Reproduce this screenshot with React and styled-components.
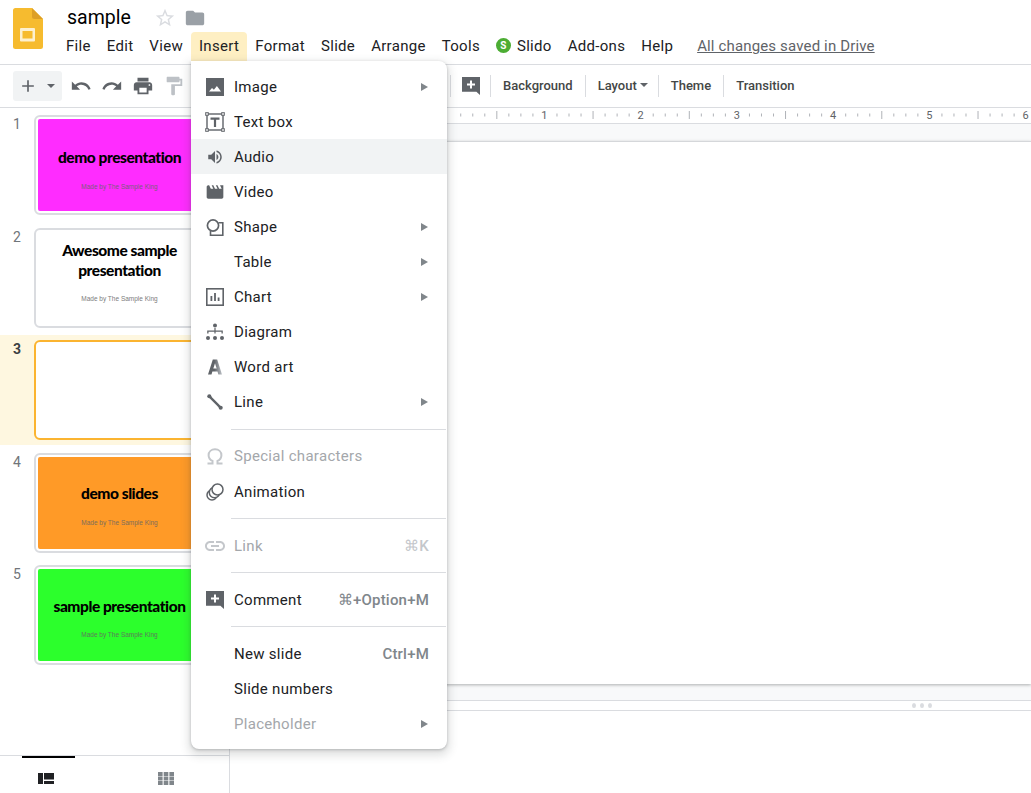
import React from "react";
import styled, { createGlobalStyle } from "styled-components";

const GlobalStyle = createGlobalStyle`
  html, body {
    margin: 0;
    height: 100%;
    overflow: hidden;
    background: #fff;
    font-family: Roboto, "Liberation Sans", sans-serif;
    color: #202124;
  }
`;

//Icons
const Svg = ({ size = 24, box = "0 0 24 24", color = "#5f6368", children }) => (
  <StyledSvg width={size} height={size} viewBox={box} fill={color}>
    {children}
  </StyledSvg>
);

const StyledSvg = styled.svg`
  flex-shrink: 0;
  display: block;
`;

const icons = {
  image: (c) => (
    <Svg size={18} box="0 0 18 18" color={c}>
      <path d="M0 0h18v18H0z" />
      <path fill="#fff" d="M3 13.5l3-3.4 1.9 1.7 3-3.8 4.1 5.5z" />
    </Svg>
  ),
  textbox: (c) => (
    <Svg size={20} box="0 0 20 20" color={c}>
      <rect x="2" y="2" width="16" height="16" fill="none" stroke={c} strokeWidth="1.4" />
      <g fill="#fff" stroke={c} strokeWidth="1">
        <rect x="0.7" y="0.7" width="2.6" height="2.6" />
        <rect x="16.7" y="0.7" width="2.6" height="2.6" />
        <rect x="0.7" y="16.7" width="2.6" height="2.6" />
        <rect x="16.7" y="16.7" width="2.6" height="2.6" />
      </g>
      <path d="M5.5 5.5h9v2.2h-3.4V15H8.9V7.7H5.5z" />
    </Svg>
  ),
  audio: (c) => (
    <Svg size={18} color={c}>
      <path d="M3 9v6h4l5 5V4L7 9H3zm13.5 3c0-1.77-1.02-3.29-2.5-4.03v8.05c1.48-.73 2.5-2.25 2.5-4.02zM14 3.23v2.06c2.89.86 5 3.54 5 6.71s-2.11 5.85-5 6.71v2.06c4.01-.91 7-4.49 7-8.77s-2.99-7.86-7-8.77z" />
    </Svg>
  ),
  video: (c) => (
    <Svg size={20} color={c}>
      <path d="M18 4l2 4h-3l-2-4h-2l2 4h-3l-2-4H8l2 4H7L5 4H4c-1.1 0-1.99.9-1.99 2L2 18c0 1.1.9 2 2 2h16c1.1 0 2-.9 2-2V4h-4z" />
    </Svg>
  ),
  shape: (c) => (
    <Svg size={18} box="0 0 18 18" color="none">
      <circle cx="7" cy="7.5" r="5.6" stroke={c} strokeWidth="1.7" />
      <path d="M12.5 4.8h4.3v12.4H4.5v-4.2" stroke={c} strokeWidth="1.6" />
    </Svg>
  ),
  chart: (c) => (
    <Svg size={18} box="0 0 18 18" color={c}>
      <rect x="0.8" y="0.8" width="16.4" height="16.4" fill="none" stroke={c} strokeWidth="1.6" />
      <path d="M4.5 8h1.8v5H4.5zM8.1 5h1.8v8H8.1zM11.7 9.5h1.8V13h-1.8z" />
    </Svg>
  ),
  diagram: (c) => (
    <Svg size={18} box="0 0 18 18" color={c}>
      <circle cx="9" cy="2.5" r="2" />
      <circle cx="2" cy="15" r="2" />
      <circle cx="9" cy="15" r="2" />
      <circle cx="16" cy="15" r="2" />
      <path d="M8.4 5h1.2v2.5h7.2v3h-1.3V8.8H9.6v1.7H8.4V8.8H2.5v1.7H1.2v-3h7.2z" />
    </Svg>
  ),
  wordart: (c) => (
    <Svg size={18} box="0 0 18 18" color={c}>
      <defs>
        <linearGradient id="wordArtFill" x1="0" x2="1" y1="0" y2="0">
          <stop offset="0.45" stopColor={c} />
          <stop offset="1" stopColor="#bdc1c6" />
        </linearGradient>
      </defs>
      <path fill="url(#wordArtFill)" d="M6.8 1.5h4.4L16 16.5h-3.6l-.9-3H6.4l-.9 3H2zm.5 9h3.4L9 5.2z" />
    </Svg>
  ),
  line: (c) => (
    <Svg size={16} box="0 0 18 18" color={c}>
      <path d="M3 3l12 12" stroke={c} strokeWidth="2.6" />
      <circle cx="2.6" cy="2.6" r="2.3" />
      <circle cx="15.4" cy="15.4" r="2.3" />
    </Svg>
  ),
  omega: (c) => (
    <Svg size={18} box="0 0 18 18" color="none">
      <path
        d="M1.5 16.5h5v-2.6C4 12.8 2.6 10.6 2.6 8.2 2.6 4.7 5.4 2.2 9 2.2s6.4 2.5 6.4 6c0 2.4-1.4 4.6-3.9 5.7v2.6h5"
        stroke={c}
        strokeWidth="2"
      />
    </Svg>
  ),
  animation: (c) => (
    <Svg size={18} box="0 0 18 18" color="none">
      <circle cx="6" cy="12" r="5" stroke={c} strokeWidth="1.5" />
      <circle cx="8.5" cy="9.5" r="5.2" fill="#fff" stroke={c} strokeWidth="1.5" />
      <circle cx="11.5" cy="6.5" r="5.5" fill="#fff" stroke={c} strokeWidth="1.5" />
    </Svg>
  ),
  link: (c) => (
    <Svg size={24} color={c}>
      <path d="M3.9 12c0-1.71 1.39-3.1 3.1-3.1h4V7H7c-2.76 0-5 2.24-5 5s2.24 5 5 5h4v-1.9H7c-1.71 0-3.1-1.39-3.1-3.1zM8 13h8v-2H8v2zm9-6h-4v1.9h4c1.71 0 3.1 1.39 3.1 3.1s-1.39 3.1-3.1 3.1h-4V17h4c2.76 0 5-2.24 5-5s-2.24-5-5-5z" />
    </Svg>
  ),
  comment: (c) => (
    <Svg size={18} box="0 0 18 18" color={c}>
      <path d="M0 0h18v18l-3.6-3.2H0z" />
      <path fill="#fff" d="M8 3.5h2v3h3v2h-3v3H8v-3H5v-2h3z" />
    </Svg>
  )
};

const menuGroups = [
  [
    { icon: "image", label: "Image", arrow: true },
    { icon: "textbox", label: "Text box" },
    { icon: "audio", label: "Audio", active: true },
    { icon: "video", label: "Video" },
    { icon: "shape", label: "Shape", arrow: true },
    { label: "Table", arrow: true },
    { icon: "chart", label: "Chart", arrow: true },
    { icon: "diagram", label: "Diagram" },
    { icon: "wordart", label: "Word art" },
    { icon: "line", label: "Line", arrow: true }
  ],
  [
    { icon: "omega", label: "Special characters", disabled: true },
    { icon: "animation", label: "Animation" }
  ],
  [{ icon: "link", label: "Link", hint: "⌘K", disabled: true }],
  [{ icon: "comment", label: "Comment", hint: "⌘+Option+M" }],
  [
    { label: "New slide", hint: "Ctrl+M" },
    { label: "Slide numbers" },
    { label: "Placeholder", arrow: true, disabled: true }
  ]
];

const sub = "Made by The Sample King";
const slides = [
  { n: 1, bg: "#ff2cff", title: ["demo presentation"], sub, bottom: 20, gap: 16 },
  { n: 2, bg: "#fff", title: ["Awesome sample", "presentation"], sub, bottom: 21, gap: 15 },
  { n: 3, bg: "#fff", title: [], selected: true },
  { n: 4, bg: "#ff9a27", title: ["demo slides"], sub, bottom: 22, gap: 16 },
  { n: 5, bg: "#2cff2c", title: ["sample presentation"], sub, bottom: 22, gap: 15 }
];

const menuBar = ["File", "Edit", "View", "Insert", "Format", "Slide", "Arrange", "Tools", "Slido", "Add-ons", "Help"];

const InsertMenu = () => (
  <Menu>
    {menuGroups.map((group, i) => (
      <React.Fragment key={i}>
        {i > 0 && <MenuDivider />}
        {group.map((item) => {
          const colour = item.disabled ? "#c4c7cb" : "#5f6368";
          return (
            <MenuRow key={item.label} $active={item.active} $disabled={item.disabled}>
              <MenuIcon>{item.icon && icons[item.icon](colour)}</MenuIcon>
              <MenuLabel>{item.label}</MenuLabel>
              {item.hint && <MenuHint $disabled={item.disabled}>{item.hint}</MenuHint>}
              {item.arrow && <MenuArrow />}
            </MenuRow>
          );
        })}
      </React.Fragment>
    ))}
  </Menu>
);

const Ruler = () => {
  const ticks = [];
  const origin = 218.2;
  for (let i = 1; i <= 48; i++) {
    const x = origin + i * 12.03;
    if (i % 8 === 0) {
      ticks.push(
        <text key={i} x={x} y="19" textAnchor="middle" fontSize="11" fill="#5f6368" fontFamily="Roboto">
          {i / 8}
        </text>
      );
    } else {
      const long = i % 4 === 0;
      ticks.push(<rect key={i} x={x} y={long ? 11 : 13.5} width="1" height={long ? 8 : 3} fill="#b0b3b8" />);
    }
  }
  return (
    <RulerBar>
      <svg width="801" height="24" viewBox="0 0 801 24">{ticks}</svg>
    </RulerBar>
  );
};

const App = () => {
  return (
    <Page>
      <GlobalStyle />
      <Header>
        <Logo>
          <svg width="30" height="41" viewBox="0 0 30 41">
            <path fill="#f6bb2f" d="M2.5 0H19l11 11v27.5a2.5 2.5 0 0 1-2.5 2.5h-25A2.5 2.5 0 0 1 0 38.5v-36A2.5 2.5 0 0 1 2.5 0z" />
            <path fill="#dd9f26" d="M19 0l11 11h-8.5A2.5 2.5 0 0 1 19 8.5z" />
            <rect x="7" y="20" width="15" height="13.5" rx="1" fill="#fdf0cf" />
            <rect x="9.5" y="23" width="10" height="7.5" fill="#f6bb2f" />
          </svg>
        </Logo>
        <HeaderMain>
          <TitleRow>
            <DocTitle>sample</DocTitle>
            <StarSlot>
              <Svg size={22} color="#dadce0">
                <path d="M22 9.24l-7.19-.62L12 2 9.19 8.63 2 9.24l5.46 4.73L5.82 21 12 17.27 18.18 21l-1.63-7.03L22 9.24zM12 15.4l-3.76 2.27 1-4.28-3.32-2.88 4.38-.38L12 6.1l1.71 4.04 4.38.38-3.32 2.88 1 4.28L12 15.4z" />
              </Svg>
            </StarSlot>
            <Svg size={22} color="#9aa0a6">
              <path d="M10 4H4c-1.1 0-1.99.9-1.99 2L2 18c0 1.1.9 2 2 2h16c1.1 0 2-.9 2-2V8c0-1.1-.9-2-2-2h-8l-2-2z" />
            </Svg>
          </TitleRow>
          <MenuBar>
            {menuBar.map((name) => (
              <MenuBarItem key={name} $open={name === "Insert"}>
                {name === "Slido" && <SlidoBadge>S</SlidoBadge>}
                {name}
                {name === "Insert" && <InsertMenu />}
              </MenuBarItem>
            ))}
            <SavedNote>All changes saved in Drive</SavedNote>
          </MenuBar>
        </HeaderMain>
      </Header>

      <Toolbar>
        <LeftTools>
          <NewSlideButton>
            <Svg size={20} color="#5f6368">
              <path d="M19 13h-6v6h-2v-6H5v-2h6V5h2v6h6z" />
            </Svg>
            <Caret />
          </NewSlideButton>
          <ToolButton>
            <Svg size={22}>
              <path d="M12.5 8c-2.65 0-5.05.99-6.9 2.6L2 7v9h9l-3.62-3.62c1.39-1.16 3.16-1.88 5.12-1.88 3.54 0 6.55 2.31 7.6 5.5l2.37-.78C21.08 11.03 17.15 8 12.5 8z" />
            </Svg>
          </ToolButton>
          <ToolButton>
            <Svg size={22}>
              <path d="M18.4 10.6C16.55 8.99 14.15 8 11.5 8c-4.65 0-8.58 3.03-9.96 7.22L3.9 16c1.05-3.19 4.05-5.5 7.6-5.5 1.95 0 3.73.72 5.12 1.88L13 16h9V7l-3.6 3.6z" />
            </Svg>
          </ToolButton>
          <ToolButton>
            <Svg size={22}>
              <path d="M19 8H5c-1.66 0-3 1.34-3 3v6h4v4h12v-4h4v-6c0-1.66-1.34-3-3-3zm-3 11H8v-5h8v5zm3-7c-.55 0-1-.45-1-1s.45-1 1-1 1 .45 1 1-.45 1-1 1zm-1-9H6v4h12V3z" />
            </Svg>
          </ToolButton>
          <ToolButton>
            <Svg size={22} color="#bdc1c6">
              <path d="M18 4V3c0-.55-.45-1-1-1H5c-.55 0-1 .45-1 1v4c0 .55.45 1 1 1h12c.55 0 1-.45 1-1V6h1v4H9v11c0 .55.45 1 1 1h2c.55 0 1-.45 1-1v-9h8V4h-3z" />
            </Svg>
          </ToolButton>
        </LeftTools>
        <ToolSep />
        <CommentTool>{icons.comment("#5f6368")}</CommentTool>
        <ToolSep />
        <TextTool>Background</TextTool>
        <ToolSep />
        <TextTool>
          Layout
          <Caret $tight />
        </TextTool>
        <ToolSep />
        <TextTool>Theme</TextTool>
        <ToolSep />
        <TextTool>Transition</TextTool>
      </Toolbar>

      <Workspace>
        <Filmstrip>
          <SlideList>
            {slides.map((slide) => (
              <SlideRow key={slide.n} $selected={slide.selected}>
                <SlideNumber $selected={slide.selected}>{slide.n}</SlideNumber>
                <SlideCard $selected={slide.selected}>
                  <SlideFace $bg={slide.bg} $bottom={slide.bottom}>
                    {slide.title.map((line) => (
                      <SlideTitle key={line}>{line}</SlideTitle>
                    ))}
                    {slide.sub && <SlideSub $gap={slide.gap}>{slide.sub}</SlideSub>}
                  </SlideFace>
                </SlideCard>
              </SlideRow>
            ))}
          </SlideList>
          <ViewTabs>
            <ViewTab $active>
              <svg width="16" height="11" viewBox="0 0 16 11" fill="#202124">
                <path d="M0 0h5v11H0zM6 0h10v6.5H6zM6 8h10v3H6z" />
              </svg>
            </ViewTab>
            <ViewTab>
              <svg width="16" height="13" viewBox="0 0 16 13" fill="#80868b">
                <path d="M0 0h4.6v4H0zM5.7 0h4.6v4H5.700zM11.400 0H16v4h-4.600zM0 4.500h4.600v4H0zM5.700 4.500h4.600v4H5.700zM11.400 4.500H16v4h-4.600zM0 9h4.600v4H0zM5.700 9h4.600v4H5.700zM11.400 9H16v4h-4.600z" />
              </svg>
            </ViewTab>
          </ViewTabs>
        </Filmstrip>

        <Editor>
          <Ruler />
          <Canvas>
            <SlideSheet />
          </Canvas>
          <Resizer>
            <Dot />
            <Dot />
            <Dot />
          </Resizer>
          <Notes />
        </Editor>
      </Workspace>
    </Page>
  );
};

const Page = styled.div`
  display: flex;
  flex-direction: column;
  height: 100vh;
  overflow: hidden;
`;

const Header = styled.header`
  display: flex;
  height: 64px;
  flex-shrink: 0;
  border-bottom: 1px solid #dadce0;
  position: relative;
  z-index: 5;
`;

const Logo = styled.div`
  width: 58px;
  padding: 8px 0 0 13px;
  box-sizing: border-box;
`;

const HeaderMain = styled.div`
  display: flex;
  flex-direction: column;
`;

const TitleRow = styled.div`
  display: flex;
  align-items: center;
  height: 32px;
  padding: 3px 0 0 9px;
  box-sizing: border-box;
`;

const DocTitle = styled.div`
  font-size: 19.5px;
  color: #000;
  width: 87px;
`;

const StarSlot = styled.div`
  width: 30px;
`;

const MenuBar = styled.nav`
  display: flex;
  align-items: center;
  height: 29px;
  font-size: 15px;
  letter-spacing: 0.3px;
`;

const MenuBarItem = styled.div`
  position: relative;
  display: flex;
  align-items: center;
  height: 29px;
  box-sizing: border-box;
  padding: 0 8px 2px;
  background: ${(p) => (p.$open ? "#feefc3" : "transparent")};
  border-radius: 4px 4px 0 0;
`;

const SlidoBadge = styled.span`
  width: 15px;
  height: 15px;
  border-radius: 50%;
  background: #4cad33;
  color: #fff;
  font-size: 10px;
  font-weight: 700;
  line-height: 15px;
  text-align: center;
  margin-right: 6px;
  letter-spacing: 0;
`;

const SavedNote = styled.span`
  margin: 0 0 2px 16px;
  color: #5f6368;
  letter-spacing: 0.15px;
  text-decoration: underline;
`;

const Menu = styled.div`
  position: absolute;
  top: 100%;
  left: 0;
  width: 256px;
  height: 688px;
  box-sizing: border-box;
  padding: 8px 0;
  background: #fff;
  border-radius: 0 8px 8px 8px;
  box-shadow: 0 1px 3px rgba(60, 64, 67, 0.3), 0 4px 8px 3px rgba(60, 64, 67, 0.15);
  font-size: 15px;
  letter-spacing: 0.3px;
  z-index: 20;
`;

const MenuRow = styled.div`
  display: flex;
  align-items: center;
  height: 35.1px;
  padding: 0 18px 0 15px;
  background: ${(p) => (p.$active ? "#f1f3f4" : "transparent")};
  color: ${(p) => (p.$disabled ? "#a4a7ab" : "#202124")};
`;

const MenuIcon = styled.span`
  width: 18px;
  height: 18px;
  margin-right: 10px;
  display: flex;
  align-items: center;
  justify-content: center;
`;

const MenuLabel = styled.span`
  flex: 1;
`;

const MenuHint = styled.span`
  font-weight: 500;
  letter-spacing: 0.2px;
  color: ${(p) => (p.$disabled ? "#c4c7cb" : "#80868b")};
`;

const MenuArrow = styled.span`
  width: 0;
  height: 0;
  margin-right: 1px;
  border-left: 7px solid #80868b;
  border-top: 4px solid transparent;
  border-bottom: 4px solid transparent;
`;

const MenuDivider = styled.div`
  height: 1px;
  margin: 9px 1px 9px 40px;
  background: #dadce0;
`;

const Toolbar = styled.div`
  display: flex;
  align-items: center;
  height: 42px;
  flex-shrink: 0;
  border-bottom: 1px solid #dadce0;
  font-size: 13px;
  font-weight: 500;
  color: #444746;
`;

const LeftTools = styled.div`
  display: flex;
  align-items: center;
  width: 450px;
  padding-left: 13px;
  box-sizing: border-box;
`;

const NewSlideButton = styled.div`
  display: flex;
  align-items: center;
  width: 49px;
  height: 30px;
  padding-left: 5px;
  margin-right: 3px;
  box-sizing: border-box;
  background: #f1f3f4;
  border-radius: 3px;
`;

const Caret = styled.span`
  width: 0;
  height: 0;
  margin-left: ${(p) => (p.$tight ? "3px" : "9px")};
  margin-right: ${(p) => (p.$tight ? "-2px" : "0")};
  border-top: 4px solid #5f6368;
  border-left: 4.5px solid transparent;
  border-right: 4.5px solid transparent;
`;

const ToolButton = styled.div`
  display: flex;
  align-items: center;
  justify-content: center;
  width: 31px;
  height: 30px;
`;

const ToolSep = styled.span`
  width: 1px;
  height: 22px;
  background: #dadce0;
  flex-shrink: 0;
`;

const CommentTool = styled.div`
  display: flex;
  justify-content: center;
  width: 39px;
`;

const TextTool = styled.div`
  display: flex;
  align-items: center;
  padding: 0 12px 2px;
`;

const Workspace = styled.div`
  display: flex;
  flex: 1;
  min-height: 0;
`;

const Filmstrip = styled.aside`
  display: flex;
  flex-direction: column;
  width: 230px;
  flex-shrink: 0;
  box-sizing: border-box;
  border-right: 1px solid #dadce0;
`;

const SlideList = styled.div`
  flex: 1;
  display: flex;
  flex-direction: column;
  gap: 2.5px;
  padding-top: 2px;
`;

const SlideRow = styled.div`
  display: flex;
  height: 110px;
  padding-top: 5px;
  box-sizing: border-box;
  background: ${(p) => (p.$selected ? "#fef7e0" : "transparent")};
`;

const SlideNumber = styled.div`
  width: 34px;
  padding-top: 1px;
  text-align: center;
  box-sizing: border-box;
  font-size: 14px;
  font-weight: ${(p) => (p.$selected ? 700 : 400)};
  color: ${(p) => (p.$selected ? "#3c4043" : "#70757a")};
`;

const SlideCard = styled.div`
  width: 171px;
  height: 100px;
  box-sizing: border-box;
  padding: 2px;
  border: 2px solid ${(p) => (p.$selected ? "#fbb430" : "#dadce0")};
  border-radius: 6px;
  background: #fff;
`;

const SlideFace = styled.div`
  display: flex;
  flex-direction: column;
  justify-content: flex-end;
  align-items: center;
  height: 100%;
  padding-bottom: ${(p) => p.$bottom || 0}px;
  box-sizing: border-box;
  border-radius: 2px;
  background: ${(p) => p.$bg};
`;

const SlideTitle = styled.div`
  font-family: Lato, sans-serif;
  font-weight: 900;
  font-size: 15.5px;
  line-height: 20px;
  letter-spacing: -0.45px;
  color: #000;
`;

const SlideSub = styled.div`
  margin-top: ${(p) => p.$gap}px;
  font-family: "Liberation Sans", sans-serif;
  font-size: 6.5px;
  line-height: 8px;
  color: #666;
  opacity: 0.85;
`;

const ViewTabs = styled.div`
  display: flex;
  height: 38px;
  flex-shrink: 0;
  box-sizing: border-box;
  border-top: 1px solid #dadce0;
  padding-left: 22px;
  gap: 64.5px;
`;

const ViewTab = styled.div`
  display: flex;
  align-items: center;
  justify-content: center;
  width: 53px;
  height: 37px;
  box-sizing: border-box;
  padding-top: 5px;
  padding-right: ${(p) => (p.$active ? "5px" : "0")};
  border-top: 2px solid ${(p) => (p.$active ? "#000" : "transparent")};
`;

const Editor = styled.main`
  display: flex;
  flex-direction: column;
  flex: 1;
  min-width: 0;
`;

const RulerBar = styled.div`
  height: 16px;
  flex-shrink: 0;
  overflow: hidden;
  box-sizing: border-box;
  border-bottom: 1px solid #dadce0;

  svg {
    display: block;
    margin-top: -8px;
  }
`;

const Canvas = styled.div`
  flex: 1;
  display: flex;
  padding: 17px 0 16px 17px;
  background: #f8f9fa;
`;

const SlideSheet = styled.div`
  flex: 1;
  background: #fff;
  border-top: 1px solid #d5d7da;
  box-shadow: 0 1px 3px rgba(60, 64, 67, 0.4);
`;

const Resizer = styled.div`
  display: flex;
  align-items: center;
  justify-content: flex-end;
  gap: 4px;
  height: 11px;
  flex-shrink: 0;
  box-sizing: border-box;
  padding-right: 99px;
  border-top: 1px solid #dadce0;
  border-bottom: 1px solid #dadce0;
`;

const Dot = styled.span`
  width: 4px;
  height: 5px;
  border-radius: 50%;
  background: #dadce0;
`;

const Notes = styled.div`
  height: 82px;
  flex-shrink: 0;
`;

export default App;
